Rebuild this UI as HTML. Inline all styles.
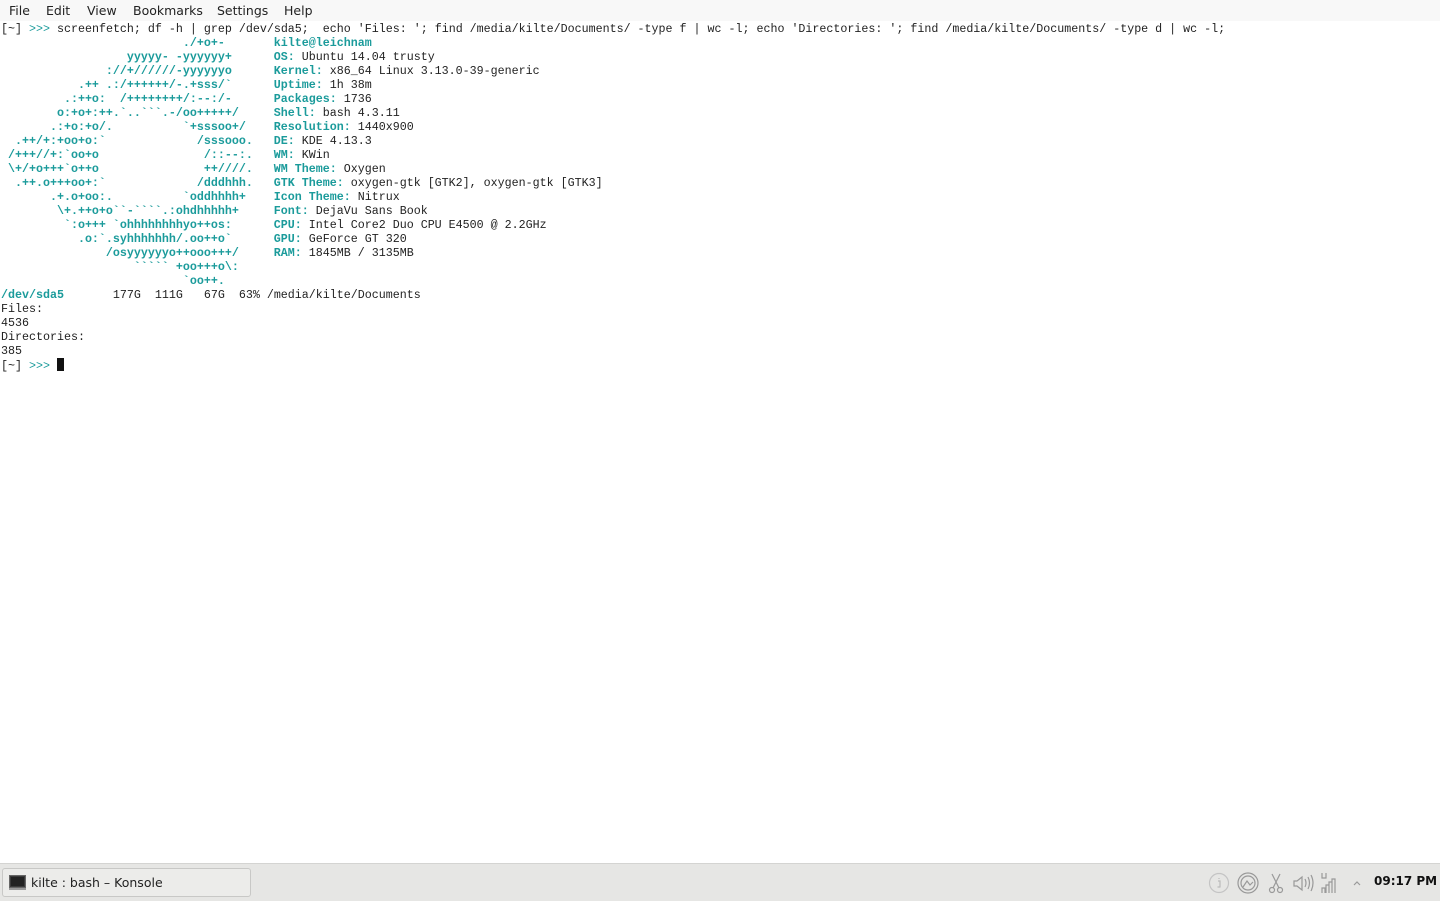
<!DOCTYPE html>
<html><head><meta charset="utf-8"><style>
html,body{margin:0;padding:0;width:1440px;height:900px;overflow:hidden;background:#fff}
#menu{position:absolute;left:0;top:0;width:1440px;height:21px;background:#f8f8f8;font:12.5px "DejaVu Sans","Liberation Sans",sans-serif;color:#222}
#menu span{position:absolute;top:3px}
pre{position:absolute;left:1px;top:22px;margin:0;font:11.67px/14px "Liberation Mono",monospace;color:#222}
b{color:#1b9b9b;font-weight:bold}
i{color:#1b9b9b;font-style:normal}
.cur{display:inline-block;width:7px;height:13px;background:#111;vertical-align:-2px}
#bar{position:absolute;left:0;top:863px;width:1440px;height:37px;background:#e6e6e4;border-top:1px solid #d4d4d2}
#btn{position:absolute;left:2px;top:4px;width:247px;height:27px;border:1px solid #c8c8c6;border-radius:3px;background:#ececea;font:12.5px "DejaVu Sans","Liberation Sans",sans-serif;color:#222}
#clock{position:absolute;left:1374px;top:10px;font:bold 12px "DejaVu Sans","Liberation Sans",sans-serif;color:#111}
</style></head><body>
<div id="menu"><span style="left:9px">File</span><span style="left:46px">Edit</span><span style="left:87px">View</span><span style="left:133px">Bookmarks</span><span style="left:217px">Settings</span><span style="left:284px">Help</span></div>
<pre>[~] <i>&gt;&gt;&gt;</i> screenfetch; df -h | grep /dev/sda5;  echo 'Files: '; find /media/kilte/Documents/ -type f | wc -l; echo 'Directories: '; find /media/kilte/Documents/ -type d | wc -l;
<b>                          ./+o+-       kilte@leichnam</b>
<b>                  yyyyy- -yyyyyy+      OS:</b> Ubuntu 14.04 trusty
<b>               ://+//////-yyyyyyo      Kernel:</b> x86_64 Linux 3.13.0-39-generic
<b>           .++ .:/++++++/-.+sss/&#96;      Uptime:</b> 1h 38m
<b>         .:++o:  /++++++++/:--:/-      Packages:</b> 1736
<b>        o:+o+:++.&#96;..&#96;&#96;&#96;.-/oo+++++/     Shell:</b> bash 4.3.11
<b>       .:+o:+o/.          &#96;+sssoo+/    Resolution:</b> 1440x900
<b>  .++/+:+oo+o:&#96;             /sssooo.   DE:</b> KDE 4.13.3
<b> /+++//+:&#96;oo+o               /::--:.   WM:</b> KWin
<b> \+/+o+++&#96;o++o               ++////.   WM Theme:</b> Oxygen
<b>  .++.o+++oo+:&#96;             /dddhhh.   GTK Theme:</b> oxygen-gtk [GTK2], oxygen-gtk [GTK3]
<b>       .+.o+oo:.          &#96;oddhhhh+    Icon Theme:</b> Nitrux
<b>        \+.++o+o&#96;&#96;-&#96;&#96;&#96;&#96;.:ohdhhhhh+     Font:</b> DejaVu Sans Book
<b>         &#96;:o+++ &#96;ohhhhhhhhyo++os:      CPU:</b> Intel Core2 Duo CPU E4500 @ 2.2GHz
<b>           .o:&#96;.syhhhhhhh/.oo++o&#96;      GPU:</b> GeForce GT 320
<b>               /osyyyyyyo++ooo+++/     RAM:</b> 1845MB / 3135MB
<b>                   &#96;&#96;&#96;&#96;&#96; +oo+++o\:</b>
<b>                          &#96;oo++.</b>
<b>/dev/sda5</b>       177G  111G   67G  63% /media/kilte/Documents
Files:
4536
Directories:
385
[~] <i>&gt;&gt;&gt;</i> <span class="cur"></span></pre>
<div id="bar">
<div id="btn">
<svg style="position:absolute;left:6px;top:6px" width="17" height="15"><rect x="0.5" y="0.5" width="16" height="12" fill="#3a3a3a" stroke="#666"/><rect x="2" y="2" width="13" height="9" fill="#222"/><rect x="0" y="13" width="17" height="2" fill="#999"/></svg>
<span style="position:absolute;left:28px;top:6px">kilte : bash – Konsole</span></div>
<svg style="position:absolute;left:1208px;top:8px" width="160" height="24" fill="none" stroke="#999" stroke-width="1.2">
<circle cx="11" cy="11" r="9.5" stroke="#c4c4c4"/><path d="M11 6v1M10 9h2v6M9.5 15h3" stroke="#bbb"/>
<circle cx="40" cy="11" r="10"/><circle cx="40" cy="11" r="7"/><path d="M35 15l4-6 3 4 3-3"/>
<circle cx="64" cy="18" r="2.5"/><circle cx="72" cy="18" r="2.5"/><path d="M65 16l7-14M71 16l-7-14"/>
<path d="M86 9h3l5-4v13l-5-4h-3z"/><path d="M97 7q2 4 0 8M100 5q3 6 0 12M103 3q4 8 0 16"/>
<path d="M114 1v5h4V1M114 21v-5h3v5M118 21v-8h3v8M121 21v-11h3v11M124 21v-14h3v14"/>
<path d="M146 13l3-3 3 3"/>
</svg>
<div id="clock">09:17 PM</div>
</div>
</body></html>
